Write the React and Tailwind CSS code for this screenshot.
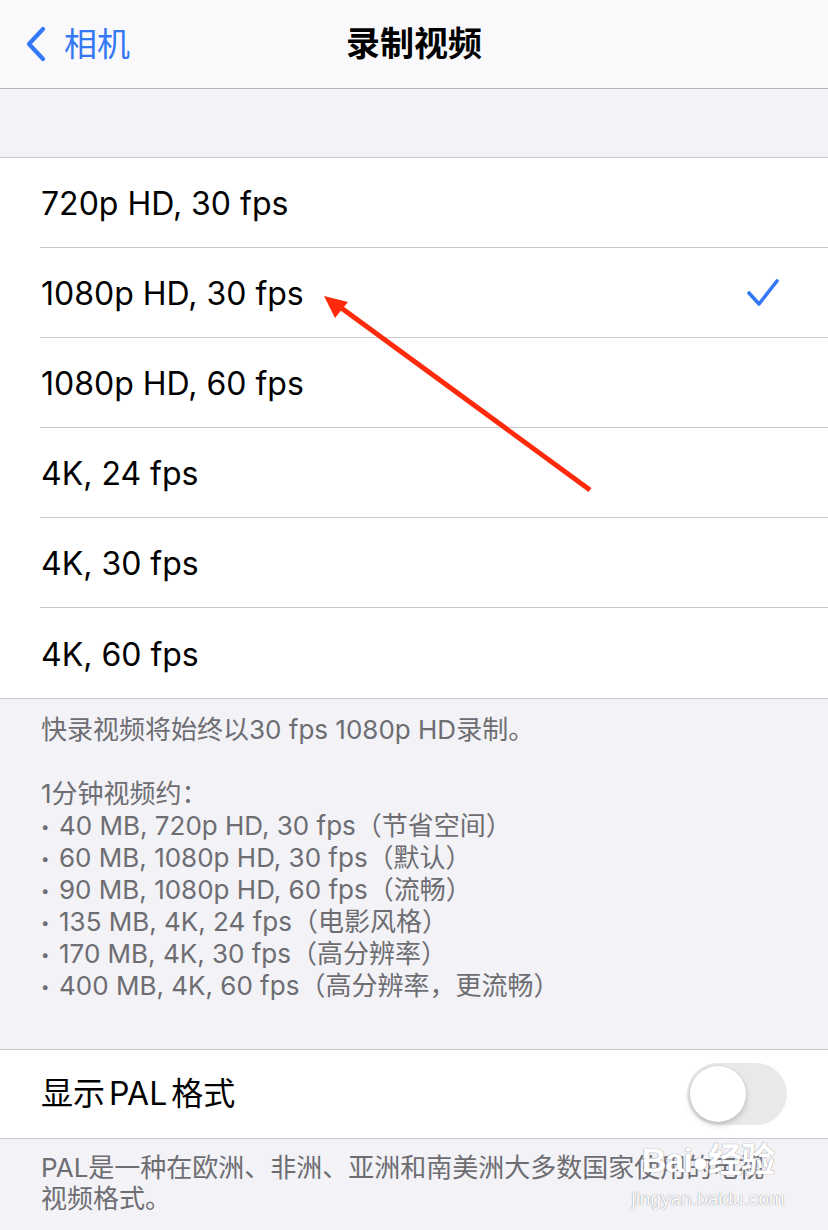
const FONT = { fontFamily: 'Inter, "Noto Sans CJK SC", sans-serif' };

const options = [
  '720p HD, 30 fps',
  '1080p HD, 30 fps',
  '1080p HD, 60 fps',
  '4K, 24 fps',
  '4K, 30 fps',
  '4K, 60 fps',
];

const sizes = [
  '40 MB, 720p HD, 30 fps（节省空间）',
  '60 MB, 1080p HD, 30 fps（默认）',
  '90 MB, 1080p HD, 60 fps（流畅）',
  '135 MB, 4K, 24 fps（电影风格）',
  '170 MB, 4K, 30 fps（高分辨率）',
  '400 MB, 4K, 60 fps（高分辨率，更流畅）',
];

function Check() {
  return (
    <svg width="34" height="30" viewBox="0 0 34 30" fill="none">
      <path d="M3 15 L13 26 L31 3" stroke="#3478f6" strokeWidth="3.6" strokeLinecap="round" strokeLinejoin="round" />
    </svg>
  );
}

function Toggle() {
  return (
    <div className="w-[100px] h-[62px] rounded-full bg-[#e9e9eb] p-[3px] flex items-center">
      <div className="w-[56px] h-[56px] rounded-full bg-white shadow-[0_3px_6px_rgba(0,0,0,0.18),0_0_0_1px_rgba(0,0,0,0.04)]" />
    </div>
  );
}

export default function App() {
  return (
    <div className="relative w-[828px] h-[1230px] overflow-hidden bg-[#f2f2f7]" style={FONT}>
      {/* Nav bar */}
      <header className="relative h-[89px] bg-[#f9f9fb] border-b border-[#b4b4b8] flex items-center">
        <div className="flex items-center pl-[26px] gap-[18px] text-[#3478f6]">
          <svg width="20" height="36" viewBox="0 0 20 36" fill="none">
            <path d="M17 3 L3 18 L17 33" stroke="#3478f6" strokeWidth="4.2" strokeLinecap="round" strokeLinejoin="round" />
          </svg>
          <span className="text-[33px] leading-none">相机</span>
        </div>
        <h1 className="absolute left-0 right-0 text-center text-[34px] font-semibold text-black leading-none">录制视频</h1>
      </header>

      {/* Spacer band */}
      <div className="h-[69px] border-b border-[#c8c7cc]" />

      {/* Options list */}
      <ul className="bg-white border-b border-[#c8c7cc]">
        {options.map((opt, i) => (
          <li key={opt} className="pl-[40px]">
            <div className={`h-[90px] flex items-center justify-between pr-[48px] ${i < options.length - 1 ? 'border-b border-[#c8c7cc]' : ''}`}>
              <span className="pl-[1px] pt-[3px] text-[32px] text-black">{opt}</span>
              {i === 1 && <Check />}
            </div>
          </li>
        ))}
      </ul>

      {/* Footer notes */}
      <div className="pl-[41px] pt-[15px] pb-[47px] text-[26px] leading-[32px] text-[#6d6d72]">
        <p>快录视频将始终以30 fps 1080p HD录制。</p>
        <p className="mt-[32px]">1分钟视频约：</p>
        {sizes.map((s) => (
          <p key={s} className="flex items-center">
            <span className="w-[18px] text-[15px] leading-none">•</span>
            <span>{s}</span>
          </p>
        ))}
      </div>

      {/* PAL row */}
      <div className="h-[90px] bg-white border-y border-[#c8c7cc] flex items-center justify-between pl-[41px] pr-[41px]">
        <span className="text-[32px] text-black">
          显示<span className="mx-[4px]">PAL</span>格式
        </span>
        <Toggle />
      </div>
      <div className="pl-[41px] pr-[50px] pt-[13px] text-[26px] leading-[31px] text-[#6d6d72]">
        PAL是一种在欧洲、非洲、亚洲和南美洲大多数国家使用的电视视频格式。
      </div>

      {/* Watermark */}
      <div className="absolute left-[632px] top-[1143px] w-[152px] flex flex-col items-center text-white pointer-events-none [text-shadow:0_0_1px_#9a9aa0,0_0_1px_#9a9aa0]">
        <span className="text-[34px] font-bold leading-none tracking-tight" style={{ fontFamily: '"Liberation Sans", "Noto Sans CJK SC", sans-serif' }}>
          Bai<span className="text-[28px]">●</span>经验
        </span>
        <span className="mt-[12px] text-[19px] leading-none" style={{ fontFamily: '"Liberation Sans", sans-serif' }}>jingyan.baidu.com</span>
      </div>

      {/* Annotation arrow */}
      <svg className="absolute left-0 top-0 pointer-events-none" width="828" height="1230">
        <line x1="590" y1="490" x2="340" y2="307" stroke="#ff2a0c" strokeWidth="5" />
        <polygon points="324,296 348,302 335,318" fill="#ff2a0c" />
      </svg>
    </div>
  );
}
